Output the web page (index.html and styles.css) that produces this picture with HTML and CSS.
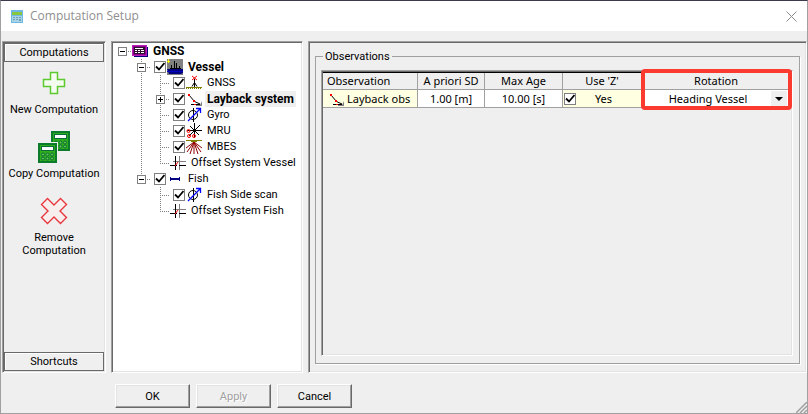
FILE: index.html
```html
<!DOCTYPE html>
<html lang="en">
<head>
    <meta charset="UTF-8">
    <meta name="viewport" content="width=device-width, initial-scale=1.0">
    <title>Computation Setup</title>
    <link rel="stylesheet" href="styles.css">
</head>
<body>
    <!-- shared icons -->
    <svg class="sprite" width="0" height="0">
        <symbol id="i-layback" viewBox="0 0 16 16">
            <path d="M10 14h4l2-4v5h-6z" fill="#808080"/>
            <path d="M3 4l5.500 6.500L14 13" fill="none" stroke="#000"/>
            <path d="M5 13.500h9" stroke="#000"/>
            <path d="M2 3h2v2H2zM7 9h2v2H7zM8 13h2v1H8z" fill="#f00"/>
        </symbol>
        <symbol id="i-gyro" viewBox="0 0 16 16">
            <circle cx="7" cy="8" r="4.500" fill="none" stroke="#000"/>
            <path d="M7.500 1v14" stroke="#000"/>
            <path d="M2 14L14 2M10 1.500h4.500V6" fill="none" stroke="#00f" stroke-width="1.300"/>
        </symbol>
        <symbol id="i-offset" viewBox="0 0 16 16">
            <path d="M9.500 1v14M3 6.500h13" stroke="#808080"/>
            <path d="M5.500 1v14M0 10.500h7M9 10.500h7" stroke="#000"/>
            <path d="M5 11l3-4" stroke="#f00"/>
        </symbol>
        <symbol id="i-calc" viewBox="0 0 19 20">
            <path d="M0 0h19v20H0z" fill="#0c7c2c"/>
            <path d="M2 2h15v16H2z" fill="#2fae1c"/>
            <path d="M3 3h13v5H3z" fill="#0c6b3c"/>
            <path d="M4 4h11v3H4z" fill="#fff"/>
            <g fill="#5fc84a" stroke="#0c6b3c">
                <circle cx="5" cy="11.500" r="1.500"/><circle cx="9.500" cy="11.500" r="1.500"/><circle cx="14" cy="11.500" r="1.500"/>
                <circle cx="5" cy="15.500" r="1.500"/><circle cx="9.500" cy="15.500" r="1.500"/><circle cx="14" cy="15.500" r="1.500"/>
            </g>
        </symbol>
    </svg>

    <header class="titlebar">
        <svg class="app-icon" width="12" height="13" viewBox="0 0 12 13">
            <path d="M0 0h12v13H0z" fill="#6db9e4"/>
            <path d="M1 2h10v3H1z" fill="#8cc63f"/>
            <path d="M1 6h10v6H1z" fill="#a9d3e6"/>
            <path d="M2 7h2v1H2zM5 7h2v1H5zM8 7h2v1H8zM2 9h2v1H2zM5 9h2v1H5zM8 9h2v2H8z" fill="#6f9fae"/>
        </svg>
        <h1>Computation Setup</h1>
        <button class="close" aria-label="Close">
            <svg width="11" height="11" viewBox="0 0 11 11"><path d="M.5.5l10 10M10.500.5l-10 10" stroke="#8a8a8a"/></svg>
        </button>
    </header>

    <main class="content">
        <nav class="panel sidebar">
            <button class="tab">Computations</button>
            <div class="actions">
                <button class="action">
                    <span class="picture"><svg width="24" height="24" viewBox="0 0 24 24"><path d="M8.500 1.500h7v7h7v7h-7v7h-7v-7h-7v-7h7z" fill="#f4fbef" stroke="#5cc92e" stroke-width="1.500"/></svg></span>
                    <span>New Computation</span>
                </button>
                <button class="action">
                    <span class="picture"><svg width="32" height="32" viewBox="0 0 32 32">
                        <use href="#i-calc" x="13" y="0" width="19" height="20"/>
                        <path d="M0 11h20v21H0z" fill="#efefef"/>
                        <use href="#i-calc" x="0" y="12" width="19" height="20"/>
                    </svg></span>
                    <span>Copy Computation</span>
                </button>
                <button class="action">
                    <span class="picture"><svg width="28" height="28" viewBox="0 0 28 28"><path d="M7.500 1.500L14 8l6.500-6.500 6 6L20 14l6.500 6.500-6 6L14 20l-6.500 6.500-6-6L8 14 1.500 7.500z" fill="#f8eeee" stroke="#e8383e" stroke-width="1.400"/></svg></span>
                    <span>Remove<br>Computation</span>
                </button>
            </div>
            <button class="tab">Shortcuts</button>
        </nav>

        <section class="panel tree">
            <ul>
                <li>
                    <div class="row">
                        <span class="branch root"><button class="toggle" aria-label="Collapse GNSS"></button></span>
                        <svg class="icon" viewBox="0 0 16 16">
                            <path d="M2 4h14v10H2z" fill="#000080"/>
                            <path d="M0 2h15v11H0z" fill="#900090"/>
                            <path d="M.5 2.500h14v10H.5z" fill="none" stroke="#e040e0" stroke-dasharray="1 1"/>
                            <path d="M2 4h11v7H2z" fill="#301030"/>
                            <path d="M3 5h8v1H3zM3 7h2v1H3zM6 7h2v1H6zM9 7h3v1H9zM3 9h2v1H3zM6 9h2v1H6zM9 9h3v1H9z" fill="#fff"/>
                        </svg>
                        <span class="label bold">GNSS</span>
                    </div>
                    <ul>
                        <li>
                            <div class="row">
                                <span class="branch"><button class="toggle" aria-label="Collapse Vessel"></button></span>
                                <input type="checkbox" class="check" id="vessel" checked>
                                <svg class="icon" viewBox="0 0 16 16">
                                    <path d="M0 0h16v16H0z" fill="#808080"/>
                                    <path d="M0 10h16v4l-2 1H2z" fill="#000080"/>
                                    <path d="M4.500 10V6M7.500 10V2M9.500 10V4M12.500 10V7M3 9.500h11" stroke="#000"/>
                                    <path d="M0 12.500h16" stroke="#0000c0"/>
                                    <path d="M1.500 0v4M0 2.500h3" stroke="#ff0"/>
                                </svg>
                                <label class="label bold" for="vessel">Vessel</label>
                            </div>
                            <ul>
                                <li>
                                    <div class="row">
                                        <span class="branch"></span>
                                        <input type="checkbox" class="check" id="gnss" checked>
                                        <svg class="icon" viewBox="0 0 16 16">
                                            <path d="M6 1l5 4M11 1L6 5" stroke="#f00"/>
                                            <path d="M8.500 4v8M6 11.500l2.500-4 2.500 4" fill="none" stroke="#000"/>
                                            <path d="M0 12h16v1H0z" fill="#808000"/>
                                            <path d="M0 13.500h16" stroke="#808000" stroke-dasharray="1 1"/>
                                        </svg>
                                        <label class="label" for="gnss">GNSS</label>
                                    </div>
                                </li>
                                <li>
                                    <div class="row">
                                        <span class="branch"><button class="toggle plus" aria-label="Expand Layback system"></button></span>
                                        <input type="checkbox" class="check" id="layback" checked>
                                        <svg class="icon"><use href="#i-layback"/></svg>
                                        <label class="label bold selected" for="layback">Layback system</label>
                                    </div>
                                </li>
                                <li>
                                    <div class="row">
                                        <span class="branch"></span>
                                        <input type="checkbox" class="check" id="gyro" checked>
                                        <svg class="icon"><use href="#i-gyro"/></svg>
                                        <label class="label" for="gyro">Gyro</label>
                                    </div>
                                </li>
                                <li>
                                    <div class="row">
                                        <span class="branch"></span>
                                        <input type="checkbox" class="check" id="mru" checked>
                                        <svg class="icon" viewBox="0 0 16 16">
                                            <path d="M8.500 0v15M1 7.500h15M3 13L14 2M4 3l9 9" stroke="#000"/>
                                            <g fill="none" stroke="#f00"><circle cx="2.500" cy="8" r="1.500"/><circle cx="3" cy="13" r="1.500"/><circle cx="8" cy="13" r="1.500"/></g>
                                        </svg>
                                        <label class="label" for="mru">MRU</label>
                                    </div>
                                </li>
                                <li>
                                    <div class="row">
                                        <span class="branch"></span>
                                        <input type="checkbox" class="check" id="mbes" checked>
                                        <svg class="icon" viewBox="0 0 16 16">
                                            <path d="M8 3L0 9M8 3L1 13M8 3L4 15M8 3v12M8 3l4 12M8 3l7 10M8 3l8 6" stroke="#900000"/>
                                            <path d="M0 1h16v1H0zM5 2h6v1H5z" fill="#808000"/>
                                        </svg>
                                        <label class="label" for="mbes">MBES</label>
                                    </div>
                                </li>
                                <li>
                                    <div class="row">
                                        <span class="branch"></span>
                                        <svg class="icon"><use href="#i-offset"/></svg>
                                        <span class="label">Offset System Vessel</span>
                                    </div>
                                </li>
                            </ul>
                        </li>
                        <li>
                            <div class="row">
                                <span class="branch"><button class="toggle" aria-label="Collapse Fish"></button></span>
                                <input type="checkbox" class="check" id="fish" checked>
                                <svg class="icon" viewBox="0 0 16 16"><path d="M3 6h1v1h8V6h1v4h-1V9H4v1H3z" fill="#000080"/></svg>
                                <label class="label" for="fish">Fish</label>
                            </div>
                            <ul>
                                <li>
                                    <div class="row">
                                        <span class="branch"></span>
                                        <input type="checkbox" class="check" id="sidescan" checked>
                                        <svg class="icon"><use href="#i-gyro"/></svg>
                                        <label class="label" for="sidescan">Fish Side scan</label>
                                    </div>
                                </li>
                                <li>
                                    <div class="row">
                                        <span class="branch"></span>
                                        <svg class="icon"><use href="#i-offset"/></svg>
                                        <span class="label">Offset System Fish</span>
                                    </div>
                                </li>
                            </ul>
                        </li>
                    </ul>
                </li>
            </ul>
        </section>

        <section class="panel details">
            <fieldset>
                <legend>Observations</legend>
                <div class="grid-box">
                    <table>
                        <colgroup>
                            <col class="col-name"><col class="col-sd"><col class="col-age"><col class="col-z"><col>
                        </colgroup>
                        <thead>
                            <tr>
                                <th class="left">Observation</th>
                                <th>A priori SD</th>
                                <th>Max Age</th>
                                <th>Use 'Z'</th>
                                <th id="rotation">Rotation</th>
                            </tr>
                        </thead>
                        <tbody>
                            <tr>
                                <td class="readonly"><div class="cell"><svg class="icon"><use href="#i-layback"/></svg>Layback obs</div></td>
                                <td>1.00 [m]</td>
                                <td>10.00 [s]</td>
                                <td class="readonly"><label class="cell use-z"><input type="checkbox" class="check" checked><span>Yes</span></label></td>
                                <td><select aria-labelledby="rotation"><option>Heading Vessel</option></select></td>
                            </tr>
                        </tbody>
                    </table>
                    <div class="highlight"></div>
                </div>
            </fieldset>
        </section>
    </main>

    <footer class="buttons">
        <button class="btn">OK</button>
        <button class="btn" disabled>Apply</button>
        <button class="btn">Cancel</button>
        <svg class="grip" width="11" height="11" viewBox="0 0 11 11">
            <path d="M0 11L11 0M4 11l7-7M8 11l3-3" stroke="#a0a0a0" stroke-width="1.500"/>
        </svg>
    </footer>
</body>
</html>
```
FILE: styles.css
```css
:root {
    --face: #efefef;
    --shadow: #a0a0a0;
    --dark: #696969;
    --light: #e3e3e3;
    --readonly: #ffffe1;
    --ui: Roboto, "Liberation Sans", sans-serif;
    --grid: "Noto Sans", "Open Sans", sans-serif;
}

* {
    box-sizing: border-box;
}

body {
    margin: 0;
    height: 100vh;
    display: flex;
    flex-direction: column;
    background: var(--face);
    border: 1px solid var(--shadow);
    border-top-color: #3a3a4c;
    font: 11px/13px var(--ui);
    color: #000;
    overflow: hidden;
}

button,
select {
    font: inherit;
    color: inherit;
    padding: 0;
    margin: 0;
}

ul {
    list-style: none;
    margin: 0;
    padding: 0;
}

.sprite {
    display: none;
}

/* title bar */
.titlebar {
    display: flex;
    align-items: center;
    height: 30px;
    padding: 0 10px;
    background: #fff;
}

.titlebar h1 {
    flex: 1;
    margin: 0 0 0 7px;
    font: 12px/16px "Open Sans", sans-serif;
    color: #8f8f8f;
}

.close {
    display: flex;
    background: none;
    border: none;
}

/* panels */
.content {
    flex: 1;
    min-height: 0;
    display: grid;
    grid-template-columns: 104px 192px 1fr;
    gap: 5px;
    padding: 10px 0 0 1px;
}

.panel {
    border: 1px solid;
    border-color: var(--shadow) #fff #fff var(--shadow);
    box-shadow: inset 1px 1px var(--dark), inset -1px -1px var(--light);
    min-width: 0;
}

.sidebar {
    display: flex;
    flex-direction: column;
    padding: 1px;
}

.tab {
    height: 19px;
    background: var(--face);
    border: 1px solid var(--dark);
    box-shadow: inset 1px 1px #fff;
}

.actions {
    flex: 1;
    display: flex;
    flex-direction: column;
    align-items: center;
    gap: 15px;
    padding-top: 5px;
}

.action {
    display: flex;
    flex-direction: column;
    align-items: center;
    gap: 4px;
    background: none;
    border: none;
    white-space: nowrap;
}

.picture {
    display: flex;
    align-items: center;
    height: 32px;
}

/* tree */
.tree {
    background: #fff;
    padding: 1px 0 0 6px;
}

.tree ul ul {
    padding-left: 19px;
}

.tree li:not(:last-child) {
    background: repeating-linear-gradient(#808080 0 1px, transparent 1px 2px) 4px 0 / 1px 100% no-repeat;
}

.row {
    display: flex;
    align-items: center;
    height: 16px;
}

.branch {
    display: flex;
    flex: none;
    align-items: center;
    width: 14px;
    height: 16px;
    background:
        repeating-linear-gradient(#808080 0 1px, transparent 1px 2px) 4px 0 / 1px 8px no-repeat,
        repeating-linear-gradient(90deg, #808080 0 1px, transparent 1px 2px) 4px 8px / 10px 1px no-repeat;
}

.branch.root {
    background: repeating-linear-gradient(90deg, #808080 0 1px, transparent 1px 2px) 4px 8px / 10px 1px no-repeat;
}

.toggle {
    width: 9px;
    height: 9px;
    border: 1px solid #808080;
    background: linear-gradient(#000, #000) center / 5px 1px no-repeat #fff;
}

.toggle.plus {
    background:
        linear-gradient(#000, #000) center / 5px 1px no-repeat,
        linear-gradient(#000, #000) center / 1px 5px no-repeat #fff;
}

.check {
    appearance: none;
    flex: none;
    width: 12px;
    height: 12px;
    margin: 0 1px 0 3px;
    border: 1px solid #808080;
    background: #fff;
}

.check:checked {
    background: #fff url("data:image/svg+xml,%3Csvg xmlns='http://www.w3.org/2000/svg' viewBox='0 0 10 10'%3E%3Cpath d='M1 4.500l3 3L9.500 1' fill='none' stroke='%23000' stroke-width='1.800'/%3E%3C/svg%3E") center / 10px 10px no-repeat;
}

.icon {
    flex: none;
    width: 16px;
    height: 16px;
}

.label {
    margin-left: 3px;
    padding: 0 2px;
    line-height: 16px;
    white-space: nowrap;
}

.bold {
    font-size: 12px;
    font-weight: 700;
}

.selected {
    background: var(--face);
}

/* observations */
.details {
    display: flex;
    padding: 8px 6px;
}

fieldset {
    flex: 1;
    display: flex;
    min-width: 0;
    margin: 0;
    padding: 7px 6px 7px 5px;
    border: 1px solid var(--shadow);
    box-shadow: 1px 1px #fff;
}

legend {
    margin-left: 2px;
    padding: 0 2px;
}

.grid-box {
    position: relative;
    flex: 1;
    border: 1px solid;
    border-color: var(--shadow) #fff #fff var(--shadow);
    box-shadow: inset 1px 1px var(--dark), inset -1px -1px var(--light);
    padding: 1px;
}

table {
    width: 100%;
    table-layout: fixed;
    border-collapse: separate;
    border-spacing: 0;
    border-top: 1px solid #000;
    font: 11px/16px var(--grid);
}

.col-name { width: 95px; }
.col-sd { width: 67px; }
.col-age { width: 78px; }
.col-z { width: 79px; }

th,
td {
    height: 17px;
    padding: 0;
    border: solid var(--shadow);
    border-width: 0 1px 1px 0;
    background: #fff;
    text-align: center;
    font-weight: 400;
    white-space: nowrap;
}

th {
    background: var(--face);
}

th.left {
    text-align: left;
    padding-left: 4px;
}

td.readonly {
    background: var(--readonly);
}

.cell {
    display: flex;
    align-items: center;
    gap: 3px;
    padding-left: 5px;
    height: 16px;
}

.use-z {
    padding-left: 0;
}

.use-z .check {
    margin-left: 1px;
}

.use-z span {
    flex: 1;
    padding-right: 14px;
}

select {
    appearance: none;
    display: block;
    width: 100%;
    height: 17px;
    padding: 0 16px 0 0;
    border: none;
    border-radius: 0;
    text-align-last: center;
    background:
        url("data:image/svg+xml,%3Csvg xmlns='http://www.w3.org/2000/svg' viewBox='0 0 16 16'%3E%3Cpath d='M0 0h16v16H0z' fill='%23efefef'/%3E%3Cpath d='M4 6h8l-4 4z'/%3E%3C/svg%3E") right 3px center / 16px 16px no-repeat #fff;
}

/* red frame over the rotation column */
.highlight {
    position: absolute;
    top: -2px;
    left: 319px;
    right: 0;
    height: 41px;
    border: 4px solid #fb3a30;
    border-radius: 4px;
    pointer-events: none;
}

/* bottom buttons */
.buttons {
    display: flex;
    gap: 6px;
    padding: 11px 0 5px 114px;
}

.btn {
    width: 75px;
    height: 24px;
    background: var(--face);
    border: 1px solid;
    border-color: #fff var(--dark) var(--dark) #fff;
    box-shadow: inset -1px -1px var(--shadow), inset 1px 1px var(--light);
}

.btn:disabled {
    color: var(--shadow);
    text-shadow: 1px 1px #fff;
}

.grip {
    align-self: flex-end;
    margin: 0 0 -5px auto;
}
```
